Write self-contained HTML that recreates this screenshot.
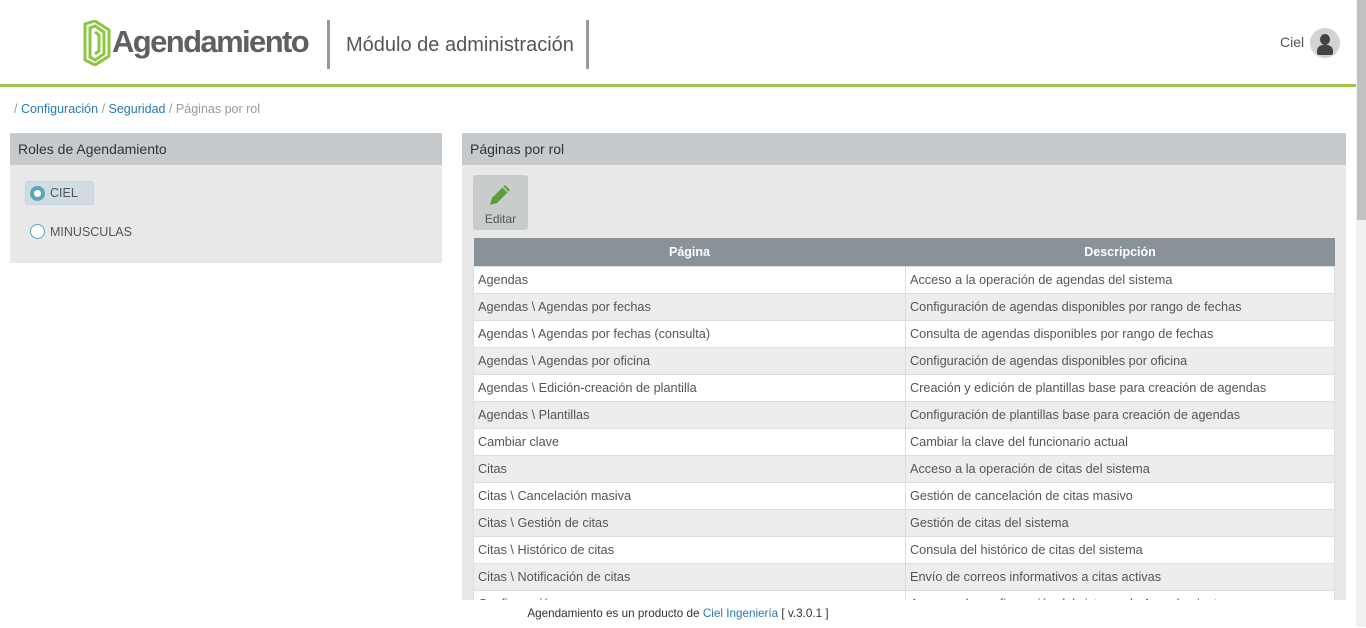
<!DOCTYPE html>
<html><head><meta charset="utf-8"><style>
*{margin:0;padding:0;box-sizing:border-box}
body{width:1366px;height:627px;overflow:hidden;background:#fff;font-family:"Liberation Sans",sans-serif;color:#555;position:relative}
.hdr{position:absolute;left:0;top:0;width:1356px;height:87px;border-bottom:3px solid #9bc54b;background:#fff}
.sep{position:absolute;top:20px;width:3px;height:49px;background:#999}
.scroll{position:absolute;right:0;top:0;width:10px;height:627px;background:#f1f1f1}
.scroll div{position:absolute;left:1px;top:0;width:9px;height:220px;background:#c1c1c1}
.panel{position:absolute;background:#e8e8e8}
.ph{height:32px;background:#c6cacc;color:#333;font-size:14px;line-height:32px;padding-left:8px}
table{border-collapse:collapse;position:absolute;left:473px;top:238px;width:862px;font-size:12.7px}
th{background:#8a9299;color:#fff;height:28px;font-weight:bold;font-size:12.5px}
td{height:27px;padding-left:4px;border:1px solid #ddd;color:#555}
tr:nth-child(odd) td{background:#eeedeb}
tr:nth-child(even) td{background:#fff}
.foot{position:absolute;left:0;top:600px;width:1356px;height:27px;background:#fff;font-size:11.7px;color:#333;text-align:center;line-height:28px}
</style></head><body>
<div class="hdr">
<svg style="position:absolute;left:83px;top:20px" width="28" height="46" viewBox="0 0 28 46"><g fill="none" stroke="#8dc63f" stroke-width="3"><path d="M2 4 L12 1 L26 10 L26 36 L12 45 L2 40 Z"/><path d="M7 8 L12 6 L21 12 L21 34 L12 40 L7 37 Z"/><path d="M12 12 L16 15 L16 31 L12 34"/></g></svg>
<div style="position:absolute;left:112px;top:24px;font-size:31px;font-weight:bold;color:#5f6062;letter-spacing:-1.6px">Agendamiento</div>
<div class="sep" style="left:327px"></div>
<div style="position:absolute;left:346px;top:34px;font-size:20px;color:#555">Módulo de administración</div>
<div class="sep" style="left:586px"></div>
<div style="position:absolute;left:1280px;top:34px;font-size:14px;color:#555">Ciel</div>
<div style="position:absolute;left:1310px;top:28px;width:30px;height:30px;border-radius:50%;background:#d3d3d3;overflow:hidden">
<div style="position:absolute;left:10px;top:6px;width:10px;height:11px;border-radius:50%;background:#444"></div>
<div style="position:absolute;left:7px;top:17px;width:16px;height:10px;border-radius:6px 6px 2px 2px;background:#444"></div></div>
</div>
<div class="scroll"><div></div></div>
<div style="position:absolute;left:14px;top:102px;font-size:12.5px;color:#999">/ <span style="color:#2a7ab0">Configuración</span> / <span style="color:#2a7ab0">Seguridad</span> / Páginas por rol</div>
<div class="panel" style="left:10px;top:133px;width:432px;height:130px">
<div class="ph">Roles de Agendamiento</div>
<div style="position:absolute;left:15px;top:48px;width:69px;height:24px;background:#cfdde3;border:1px solid #c4d4da;border-radius:3px"></div>
<div style="position:absolute;left:20px;top:53px;width:15px;height:15px;border-radius:50%;background:#5ea3b8"><div style="position:absolute;left:4px;top:4px;width:7px;height:7px;border-radius:50%;background:#fff"></div></div>
<div style="position:absolute;left:40px;top:53px;font-size:12.5px">CIEL</div>
<div style="position:absolute;left:20px;top:91px;width:15px;height:15px;border-radius:50%;border:1px solid #5ea3b8;background:#fff"></div>
<div style="position:absolute;left:40px;top:92px;font-size:12.5px">MINUSCULAS</div>
</div>
<div class="panel" style="left:462px;top:133px;width:884px;height:494px">
<div class="ph">Páginas por rol</div>
<div style="position:absolute;left:11px;top:42px;width:55px;height:55px;background:#c9cccd;border-radius:3px">
<svg style="position:absolute;left:14px;top:7px" width="26" height="26" viewBox="0 0 26 26"><path d="M3 23 L5 16 L18 3 L23 8 L10 21 Z" fill="#5a9e3a"/><path d="M16 5 L21 10" stroke="#c9cccd" stroke-width="1.5"/></svg>
<div style="position:absolute;left:0;width:55px;top:37px;text-align:center;font-size:12px;color:#555">Editar</div></div>
</div>
<table>
<tr><th style="width:432px">Página</th><th>Descripción</th></tr>
<tr><td>Agendas</td><td>Acceso a la operación de agendas del sistema</td></tr>
<tr><td>Agendas \ Agendas por fechas</td><td>Configuración de agendas disponibles por rango de fechas</td></tr>
<tr><td>Agendas \ Agendas por fechas (consulta)</td><td>Consulta de agendas disponibles por rango de fechas</td></tr>
<tr><td>Agendas \ Agendas por oficina</td><td>Configuración de agendas disponibles por oficina</td></tr>
<tr><td>Agendas \ Edición-creación de plantilla</td><td>Creación y edición de plantillas base para creación de agendas</td></tr>
<tr><td>Agendas \ Plantillas</td><td>Configuración de plantillas base para creación de agendas</td></tr>
<tr><td>Cambiar clave</td><td>Cambiar la clave del funcionario actual</td></tr>
<tr><td>Citas</td><td>Acceso a la operación de citas del sistema</td></tr>
<tr><td>Citas \ Cancelación masiva</td><td>Gestión de cancelación de citas masivo</td></tr>
<tr><td>Citas \ Gestión de citas</td><td>Gestión de citas del sistema</td></tr>
<tr><td>Citas \ Histórico de citas</td><td>Consula del histórico de citas del sistema</td></tr>
<tr><td>Citas \ Notificación de citas</td><td>Envío de correos informativos a citas activas</td></tr>
<tr><td>Configuración</td><td>Acceso a la configuración del sistema de Agendamiento</td></tr>
</table>
<div class="foot">Agendamiento es un producto de <span style="color:#2a7ab0">Ciel Ingeniería</span> [ v.3.0.1 ]</div>
</body></html>
